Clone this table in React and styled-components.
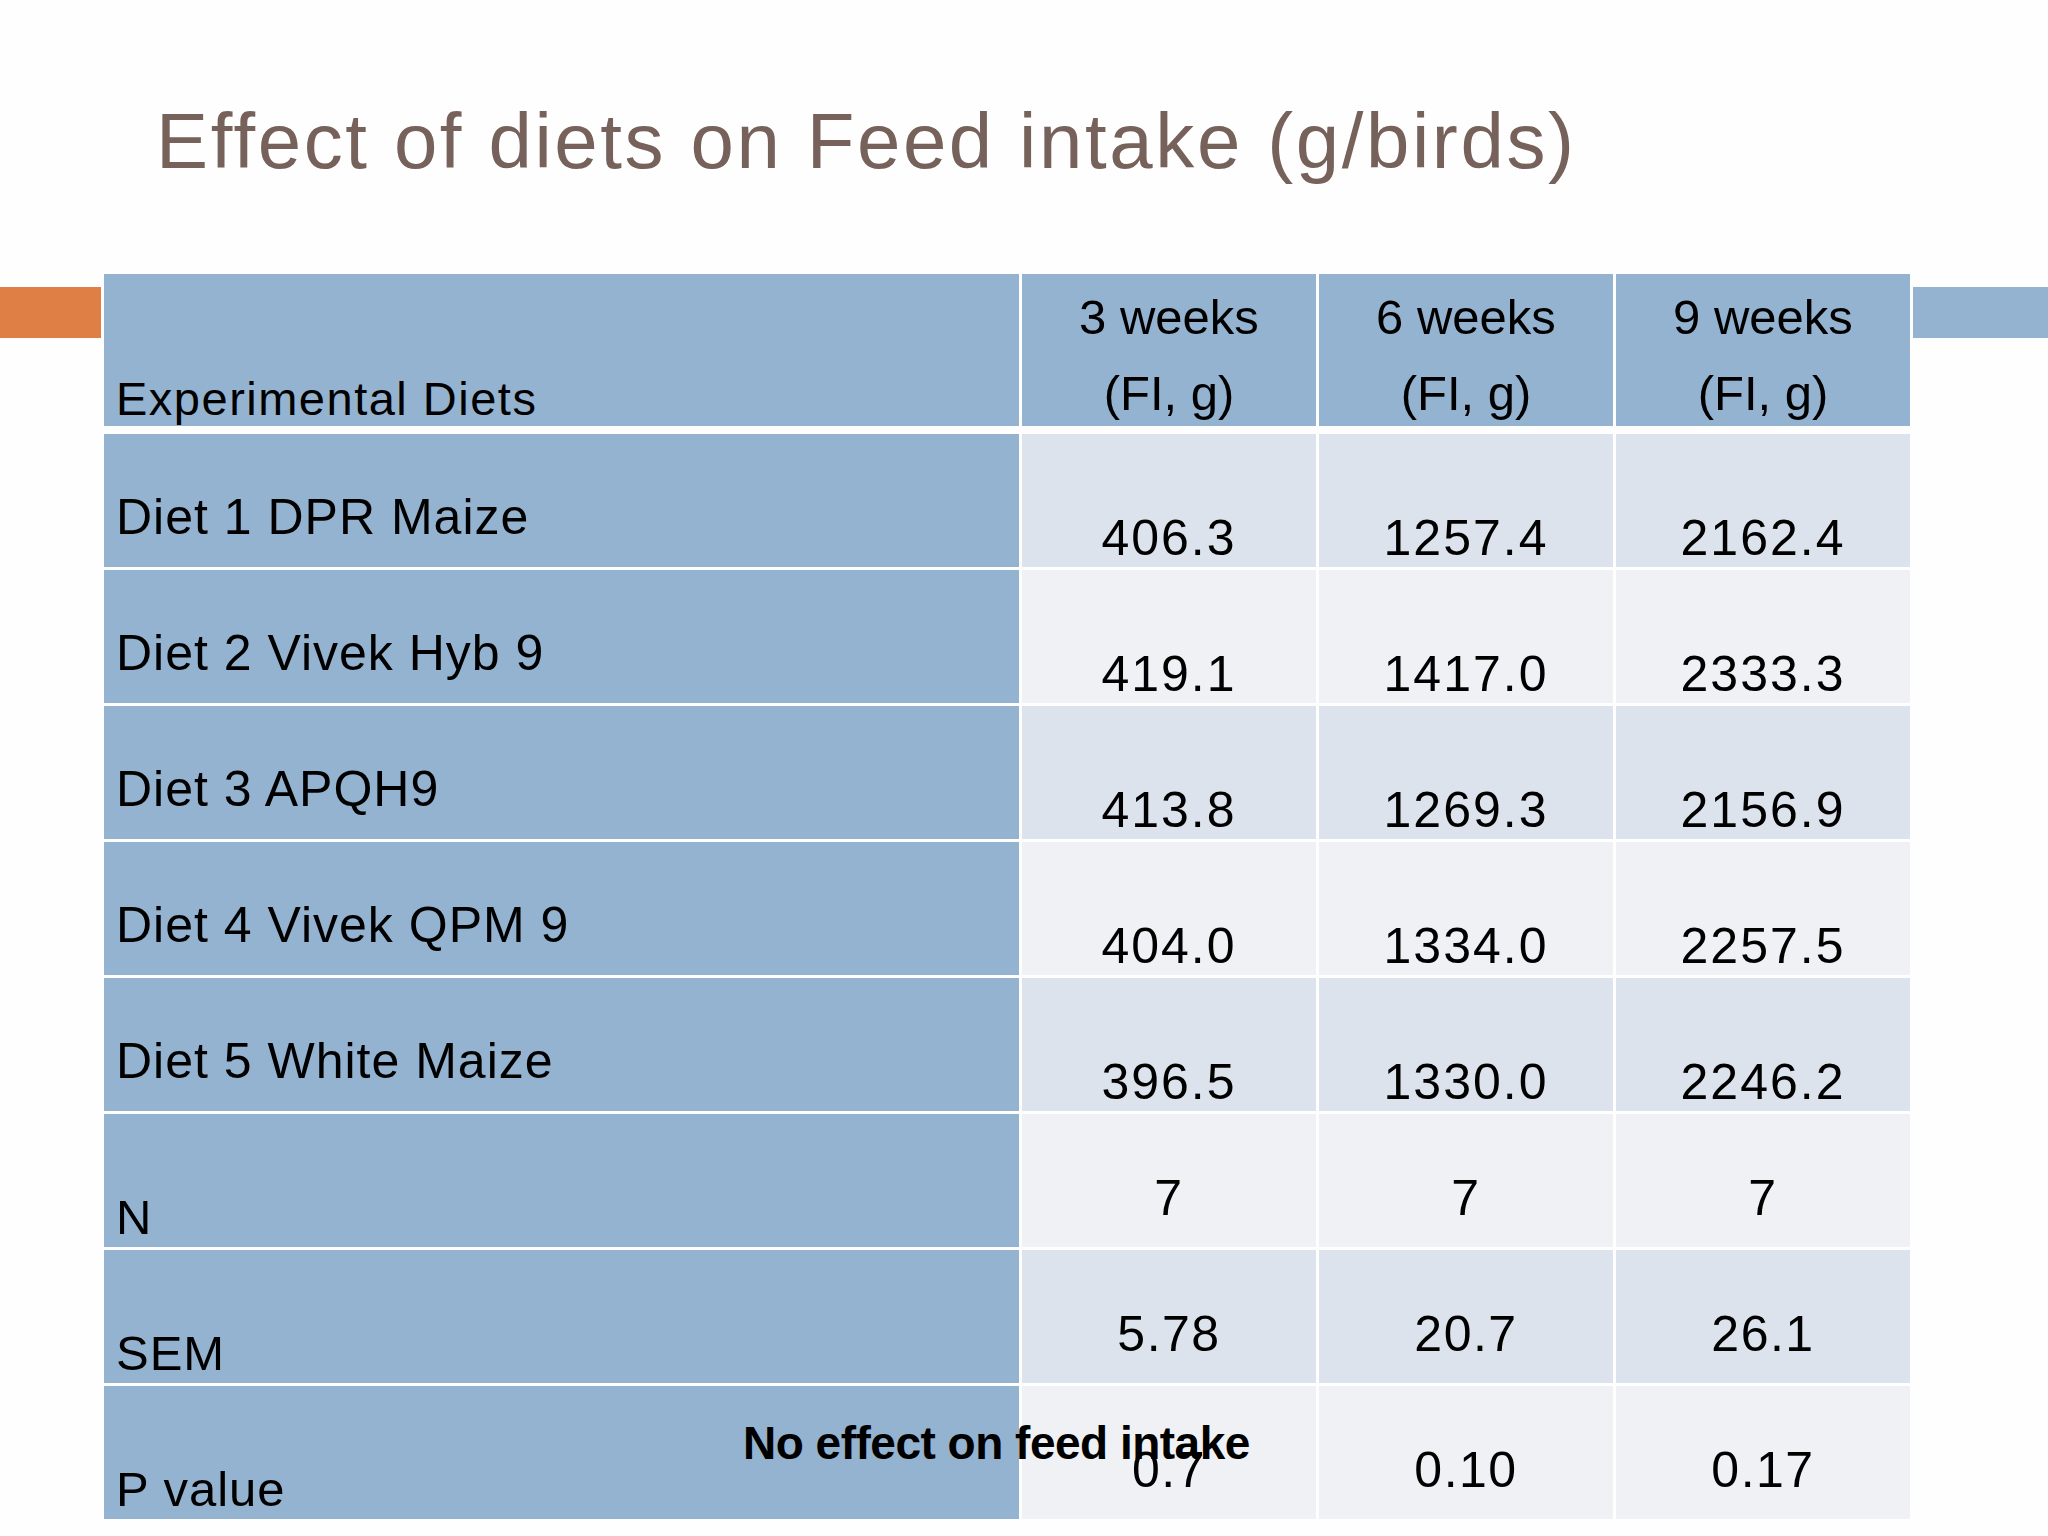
import React from "react";
import styled, { createGlobalStyle } from "styled-components";

const GlobalStyle = createGlobalStyle`
  html, body {
    margin: 0;
    padding: 0;
    background: #ffffff;
  }
`;

const BLUE = "#94b3d0";

const Slide = styled.div`
  width: 2048px;
  height: 1536px;
  overflow: hidden;
  background: #fefefe;
  font-family: "Liberation Sans", Arial, sans-serif;
  color: #000;
`;

const Title = styled.h1`
  margin: 102px 0 0 156px;
  font-size: 78px;
  line-height: 1;
  font-weight: 400;
  letter-spacing: 2.6px;
  color: #76625a;
  white-space: nowrap;
`;

const Band = styled.div`
  display: flex;
  align-items: flex-start;
  gap: 3px;
  margin-top: 94px;
`;

const Accent = styled.div`
  height: 51px;
  margin-top: 13px;
  background: ${(p) => p.color};
  width: ${(p) => (p.grow ? "auto" : "101px")};
  flex: ${(p) => (p.grow ? 1 : "none")};
`;

const Table = styled.div`
  display: flex;
  flex-direction: column;
  gap: 3px;
  width: 1806px;
  flex: none;
`;

const Row = styled.div`
  position: relative;
  display: grid;
  grid-template-columns: 915px 294px 294px 294px;
  column-gap: 3px;
  height: ${(p) => (p.header ? "152px" : "133px")};
  margin-bottom: ${(p) => (p.header ? "5px" : "0")};
`;

const LabelCell = styled.div`
  display: flex;
  align-items: flex-end;
  padding: 0 0 ${(p) => p.pb}px 12px;
  background: ${BLUE};
  font-size: ${(p) => p.size}px;
  letter-spacing: ${(p) => p.spacing}px;
  line-height: 1;
  white-space: nowrap;
`;

const WeekCell = styled.div`
  display: flex;
  flex-direction: column;
  justify-content: flex-end;
  align-items: center;
  gap: 27px;
  padding-bottom: 8px;
  background: ${BLUE};
  font-size: 49px;
  line-height: 1;
  white-space: nowrap;
`;

const ValueCell = styled.div`
  display: flex;
  align-items: flex-end;
  justify-content: center;
  padding-bottom: ${(p) => p.pb}px;
  background: ${(p) => (p.shade ? "#dce3ec" : "#eff1f4")};
  font-size: 50px;
  letter-spacing: ${(p) => p.spacing}px;
  line-height: 1;
  white-space: nowrap;
`;

const Note = styled.div`
  position: absolute;
  left: 639px;
  top: 34px;
  font-size: 46px;
  font-weight: 700;
  letter-spacing: -0.5px;
  line-height: 1;
  white-space: nowrap;
`;

const weeks = ["3 weeks", "6 weeks", "9 weeks"];

const rows = [
  { label: "Diet 1 DPR Maize", values: ["406.3", "1257.4", "2162.4"], kind: "diet" },
  { label: "Diet 2 Vivek Hyb 9", values: ["419.1", "1417.0", "2333.3"], kind: "diet" },
  { label: "Diet 3 APQH9", values: ["413.8", "1269.3", "2156.9"], kind: "diet" },
  { label: "Diet 4 Vivek QPM 9", values: ["404.0", "1334.0", "2257.5"], kind: "diet" },
  { label: "Diet 5 White Maize", values: ["396.5", "1330.0", "2246.2"], kind: "diet" },
  { label: "N", values: ["7", "7", "7"], kind: "stat" },
  { label: "SEM", values: ["5.78", "20.7", "26.1"], kind: "stat" },
  { label: "P value", values: ["0.7", "0.10", "0.17"], kind: "stat", note: true },
];

export default function App() {
  return (
    <>
      <GlobalStyle />
      <Slide>
        <Title>Effect of diets on Feed intake (g/birds)</Title>
        <Band>
          <Accent color="#e07f45" />
          <Table>
            <Row header>
              <LabelCell pb={4} size={47} spacing={1.5}>
                Experimental Diets
              </LabelCell>
              {weeks.map((w) => (
                <WeekCell key={w}>
                  <span>{w}</span>
                  <span>(FI, g)</span>
                </WeekCell>
              ))}
            </Row>
            {rows.map((r, i) => {
              const diet = r.kind === "diet";
              return (
                <Row key={r.label}>
                  <LabelCell pb={diet ? 25 : 5} size={diet ? 50 : 49} spacing={1}>
                    {r.label}
                  </LabelCell>
                  {r.values.map((v, j) => (
                    <ValueCell
                      key={j}
                      shade={i % 2 === 0}
                      pb={diet ? 4 : 24}
                      spacing={diet ? 2 : 1.5}
                    >
                      {v}
                    </ValueCell>
                  ))}
                  {r.note && <Note>No effect on feed intake</Note>}
                </Row>
              );
            })}
          </Table>
          <Accent color={BLUE} grow />
        </Band>
      </Slide>
    </>
  );
}
